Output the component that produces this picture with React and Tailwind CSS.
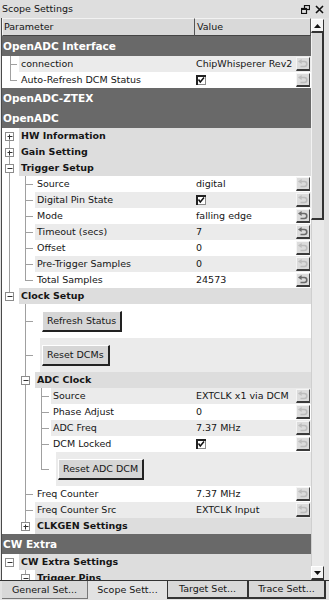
import React from 'react'

const LINE = '#a0a0a0'

const rows = [
  { t: 'dark', label: 'OpenADC Interface' },
  { t: 'param', label: 'connection', value: 'ChipWhisperer Rev2', bg: 'bg-[#ebebeb]', w: 17, g: [['v', 8], ['h', 8, 15]] },
  { t: 'param', label: 'Auto-Refresh DCM Status', check: true, bg: 'bg-white', w: 17, g: [['vt', 8], ['h', 8, 15]] },
  { t: 'dark', label: 'OpenADC-ZTEX' },
  { t: 'dark', label: 'OpenADC' },
  { t: 'sec', label: 'HW Information', w: 17, g: [['vb', 7], ['e', 7, false]] },
  { t: 'sec', label: 'Gain Setting', w: 17, g: [['v', 7], ['e', 7, false]] },
  { t: 'sec', label: 'Trigger Setup', w: 17, g: [['v', 7], ['e', 7, true]] },
  { t: 'param', label: 'Source', value: 'digital', bg: 'bg-white', w: 33, g: [['v', 7], ['v', 23], ['h', 23, 31]] },
  { t: 'param', label: 'Digital Pin State', check: true, bg: 'bg-[#ebebeb]', w: 33, g: [['v', 7], ['v', 23], ['h', 23, 31]] },
  { t: 'param', label: 'Mode', value: 'falling edge', on: true, bg: 'bg-white', w: 33, g: [['v', 7], ['v', 23], ['h', 23, 31]] },
  { t: 'param', label: 'Timeout (secs)', value: '7', on: true, bg: 'bg-[#ebebeb]', w: 33, g: [['v', 7], ['v', 23], ['h', 23, 31]] },
  { t: 'param', label: 'Offset', value: '0', bg: 'bg-white', w: 33, g: [['v', 7], ['v', 23], ['h', 23, 31]] },
  { t: 'param', label: 'Pre-Trigger Samples', value: '0', bg: 'bg-[#ebebeb]', w: 33, g: [['v', 7], ['v', 23], ['h', 23, 31]] },
  { t: 'param', label: 'Total Samples', value: '24573', on: true, bg: 'bg-white', w: 33, g: [['v', 7], ['vt', 23], ['h', 23, 31]] },
  { t: 'sec', label: 'Clock Setup', w: 17, g: [['vt', 7], ['e', 7, true]] },
  { t: 'btn', label: 'Refresh Status', bg: 'bg-white', w: 38, g: [['v', 23], ['h', 23, 31]] },
  { t: 'btn', label: 'Reset DCMs', bg: 'bg-[#ebebeb]', w: 38, g: [['v', 23], ['h', 23, 31]] },
  { t: 'sec', label: 'ADC Clock', w: 33, g: [['v', 23], ['e', 23, true]] },
  { t: 'param', label: 'Source', value: 'EXTCLK x1 via DCM', bg: 'bg-[#ebebeb]', w: 49, g: [['v', 23], ['v', 39], ['h', 39, 47]] },
  { t: 'param', label: 'Phase Adjust', value: '0', bg: 'bg-white', w: 49, g: [['v', 23], ['v', 39], ['h', 39, 47]] },
  { t: 'param', label: 'ADC Freq', value: '7.37 MHz', bg: 'bg-[#ebebeb]', w: 49, g: [['v', 23], ['v', 39], ['h', 39, 47]] },
  { t: 'param', label: 'DCM Locked', check: true, bg: 'bg-white', w: 49, g: [['v', 23], ['v', 39], ['h', 39, 47]] },
  { t: 'btn', label: 'Reset ADC DCM', bg: 'bg-[#ebebeb]', w: 54, g: [['v', 23], ['vt', 39], ['h', 39, 47]] },
  { t: 'param', label: 'Freq Counter', value: '7.37 MHz', bg: 'bg-white', w: 33, g: [['v', 23], ['h', 23, 31]] },
  { t: 'param', label: 'Freq Counter Src', value: 'EXTCLK Input', bg: 'bg-[#ebebeb]', w: 33, g: [['v', 23], ['h', 23, 31]] },
  { t: 'sec', label: 'CLKGEN Settings', w: 33, g: [['vt', 23], ['e', 23, false]] },
  { t: 'dark', label: 'CW Extra' },
  { t: 'sec', label: 'CW Extra Settings', w: 17, g: [['e', 7, true]] },
  { t: 'sec', label: 'Trigger Pins', w: 33, g: [['v', 23], ['e', 23, true]] },
]

function Gutter({ w, h, g }) {
  const m = Math.floor(h / 2)
  const lines = g.filter((s) => s[0] !== 'e')
  const boxes = g.filter((s) => s[0] === 'e')
  return (
    <svg width={w} height={h} className="block flex-none bg-white">
      {lines.map((s, i) => {
        const [k, x, x2] = s
        if (k === 'v') return <line key={i} x1={x + 0.5} y1={0} x2={x + 0.5} y2={h} stroke={LINE} />
        if (k === 'vt') return <line key={i} x1={x + 0.5} y1={0} x2={x + 0.5} y2={m + 1} stroke={LINE} />
        if (k === 'vb') return <line key={i} x1={x + 0.5} y1={m} x2={x + 0.5} y2={h} stroke={LINE} />
        return <line key={i} x1={x} y1={m + 0.5} x2={x2} y2={m + 0.5} stroke={LINE} />
      })}
      {boxes.map((s, i) => {
        const [, x, open] = s
        return (
          <g key={'e' + i}>
            <rect x={x - 3.5} y={m - 3.5} width={8} height={8} fill="#fff" stroke="#8c8c8c" />
            <line x1={x - 1.5} y1={m + 0.5} x2={x + 3.5} y2={m + 0.5} stroke="#333" />
            {!open && <line x1={x + 0.5} y1={m - 1.5} x2={x + 0.5} y2={m + 3.5} stroke="#333" />}
          </g>
        )
      })}
    </svg>
  )
}

function ResetBtn({ on }) {
  const c = on ? '#6b6b6b' : '#bdbdbd'
  return (
    <div className="flex h-[14px] w-[14px] flex-none items-center justify-center border-t border-l border-r border-b-2 border-t-[#f5f5f5] border-l-[#f5f5f5] border-r-[#444] border-b-[#3a3a3a] bg-[#dcdcdc]">
      <svg width="10" height="9" viewBox="0 0 10 9">
        <path d="M3 2.5 H6.3 A2.5 2.5 0 0 1 6.3 7.5 H2.5" fill="none" stroke={c} strokeWidth="1.6" />
        <polygon points="0,2.5 3.6,0 3.6,5" fill={c} />
      </svg>
    </div>
  )
}

function Check() {
  return (
    <svg width="10" height="10" viewBox="0 0 10 10" className="block">
      <rect x="0.5" y="0.5" width="9" height="9" fill="#fff" stroke="#8a8a8a" />
      <path d="M0 1 H10 M1 0 V10" stroke="#222" strokeWidth="2" />
      <path d="M2.5 4.5 L4.3 7 L8 2.5" fill="none" stroke="#111" strokeWidth="1.5" />
    </svg>
  )
}

function Row({ r }) {
  if (r.t === 'dark') {
    return (
      <div className="flex h-[20px] flex-none items-center bg-[#696969] pl-[1px] text-[10.5px] font-bold text-white">
        {r.label}
      </div>
    )
  }
  if (r.t === 'sec') {
    return (
      <div className="flex h-[16px] flex-none">
        <Gutter w={r.w} h={16} g={r.g} />
        <div className="flex flex-1 items-center bg-[#dddddd] pl-[2px] font-bold">{r.label}</div>
      </div>
    )
  }
  if (r.t === 'btn') {
    return (
      <div className="flex h-[34px] flex-none">
        <Gutter w={r.w} h={34} g={r.g} />
        <div className={'flex flex-1 items-center pl-[2px] ' + r.bg}>
          <div className="flex h-[21px] items-center border-t border-l border-r-2 border-b-2 border-t-white border-l-white border-r-[#222] border-b-[#222] bg-[#d6d6d6] px-[4px]">
            {r.label}
          </div>
        </div>
      </div>
    )
  }
  return (
    <div className="flex h-[16px] flex-none">
      <Gutter w={r.w} h={16} g={r.g} />
      <div className={'flex flex-1 items-center ' + r.bg}>
        <div className="min-w-0 flex-1 truncate pl-[2px]">{r.label}</div>
        <div className="flex w-[101px] flex-none items-center whitespace-nowrap pl-[1px]">
          {r.check ? <Check /> : r.value}
        </div>
        <ResetBtn on={r.on} />
        <div className="w-[1px] flex-none" />
      </div>
    </div>
  )
}

function Tab({ label, cls }) {
  return <div className={'flex h-full items-center justify-center ' + cls}>{label}</div>
}

export default function App() {
  return (
    <div className="flex h-[600px] w-[329px] flex-col overflow-hidden bg-[#e2e2e2] font-['DejaVu_Sans',sans-serif] text-[9.5px] leading-none text-[#151515]">
      <div className="flex h-[18px] flex-none items-center justify-between pl-[2px] pr-[5px] bg-[#dedede]">
        <span>Scope Settings</span>
        <div className="flex items-center gap-[5px]">
          <svg width="9" height="9" viewBox="0 0 9 9">
            <rect x="3.5" y="0.5" width="5" height="4" fill="none" stroke="#111" strokeWidth="1.2" />
            <rect x="0.5" y="3.5" width="5" height="5" fill="#dedede" stroke="#111" strokeWidth="1.2" />
            <path d="M0.5 4.2 H5.5" stroke="#111" strokeWidth="1.6" />
          </svg>
          <svg width="9" height="9" viewBox="0 0 9 9">
            <path d="M1 1 L8 8 M8 1 L1 8" stroke="#111" strokeWidth="1.6" />
          </svg>
        </div>
      </div>

      <div className="flex min-h-0 flex-1 pl-[1px]">
        <div className="flex w-[310px] flex-none flex-col overflow-hidden border-l border-[#4a4a4a] bg-white">
          <div className="flex h-[18px] flex-none bg-[#d9d9d9]">
            <div className="flex w-[193px] flex-none items-center border-t border-l border-r border-b border-t-[#f2f2f2] border-l-[#f2f2f2] border-r-[#555] border-b-[#444] pl-[1px]">
              Parameter
            </div>
            <div className="flex flex-1 items-center border-t border-r border-b border-t-[#f2f2f2] border-r-[#555] border-b-[#444] pl-[2px]">
              Value
            </div>
          </div>
          {rows.map((r, i) => (
            <Row key={i} r={r} />
          ))}
        </div>

        <div className="flex w-[13px] flex-none flex-col bg-[#e9e9e9]">
          <div className="mt-[1px] flex h-[14px] flex-none items-center justify-center border-t border-l border-r border-b-2 border-t-white border-l-white border-r-[#333] border-b-[#333] bg-[#f4f4f4]">
            <svg width="7" height="4" viewBox="0 0 7 4">
              <polygon points="3.5,0 7,4 0,4" fill="#111" />
            </svg>
          </div>
          <div className="h-[187px] flex-none border-l border-r-2 border-b-2 border-l-[#f2f2f2] border-r-[#333] border-b-[#333] bg-[#d7d7d7]" />
          <div className="flex-1 border-l border-[#cfcfcf]" />
          <div className="flex h-[14px] flex-none items-center justify-center border-t border-l border-r border-b-2 border-t-white border-l-white border-r-[#333] border-b-[#333] bg-[#f4f4f4]">
            <svg width="7" height="4" viewBox="0 0 7 4">
              <polygon points="0,0 7,0 3.5,4" fill="#111" />
            </svg>
          </div>
        </div>
      </div>

      <div className="flex h-[20px] flex-none border-t border-[#333] pl-[2px] pb-[1px]">
        <Tab label="General Set..." cls="w-[86px] bg-[#d8d8d8] border-r border-b border-[#777]" />
        <Tab label="Scope Sett..." cls="w-[79px] bg-[#e2e2e2]" />
        <Tab label="Target Set..." cls="w-[82px] bg-[#d8d8d8] border-l border-r-2 border-b-2 border-[#333]" />
        <Tab label="Trace Sett..." cls="w-[77px] bg-[#d8d8d8] border-r-2 border-b-2 border-[#333]" />
      </div>
    </div>
  )
}
